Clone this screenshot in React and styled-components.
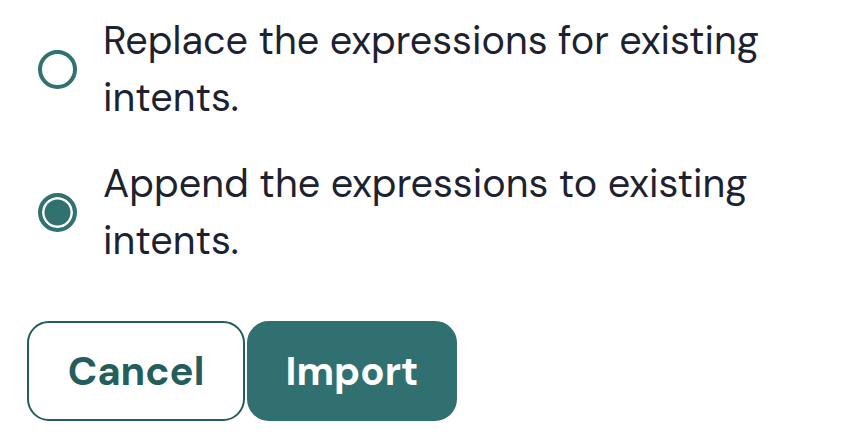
import React, { useState } from "react"
import styled, { createGlobalStyle } from "styled-components"

const GlobalStyle = createGlobalStyle`
  body {
    margin: 0;
    background: #ffffff;
    font-family: "DM Sans", Inter, "Liberation Sans", sans-serif;
  }
`

const Panel = styled.div`
  width: 842px;
  height: 448px;
  box-sizing: border-box;
  padding: 12px 0 0 27px;
  display: flex;
  flex-direction: column;
`

const OptionList = styled.div`
  display: flex;
  flex-direction: column;
  gap: 29px;
`

const Option = styled.label`
  display: flex;
  align-items: center;
  gap: 26px;
  padding-left: 11px;
  cursor: pointer;
`

const Radio = styled.span`
  flex: 0 0 auto;
  width: 39px;
  height: 39px;
  box-sizing: border-box;
  border-radius: 50%;
  border: ${(p) => (p.$checked ? "4px" : "4.5px")} solid #317170;
  background: ${(p) => (p.$checked ? "#317170" : "#ffffff")};
  box-shadow: ${(p) => (p.$checked ? "inset 0 0 0 2.5px #ffffff" : "none")};
`

const OptionText = styled.span`
  font-size: 39.6px;
  line-height: 57px;
  color: #1d2230;
  width: 680px;
`

const Actions = styled.div`
  display: flex;
  gap: 2px;
  margin-top: 52px;
`

const Button = styled.button`
  height: 100px;
  width: ${(p) => p.$width}px;
  box-sizing: border-box;
  border-radius: 22px;
  font-family: inherit;
  font-size: 40px;
  font-weight: 700;
  cursor: pointer;
  border: 2px solid #245d5b;
  background: ${(p) => (p.$primary ? "#317070" : "#ffffff")};
  color: ${(p) => (p.$primary ? "#ffffff" : "#245d5b")};
  border-color: ${(p) => (p.$primary ? "#317070" : "#245d5b")};
`

const options = [
  { id: "replace", text: "Replace the expressions for existing intents." },
  { id: "append", text: "Append the expressions to existing intents." },
]

export default function App() {
  const [mode, setMode] = useState("append")
  return (
    <>
      <GlobalStyle />
      <Panel>
        <OptionList>
          {options.map((o) => (
            <Option key={o.id} onClick={() => setMode(o.id)}>
              <Radio $checked={mode === o.id} />
              <OptionText>{o.text}</OptionText>
            </Option>
          ))}
        </OptionList>
        <Actions>
          <Button $width={218}>Cancel</Button>
          <Button $width={210} $primary>
            Import
          </Button>
        </Actions>
      </Panel>
    </>
  )
}
